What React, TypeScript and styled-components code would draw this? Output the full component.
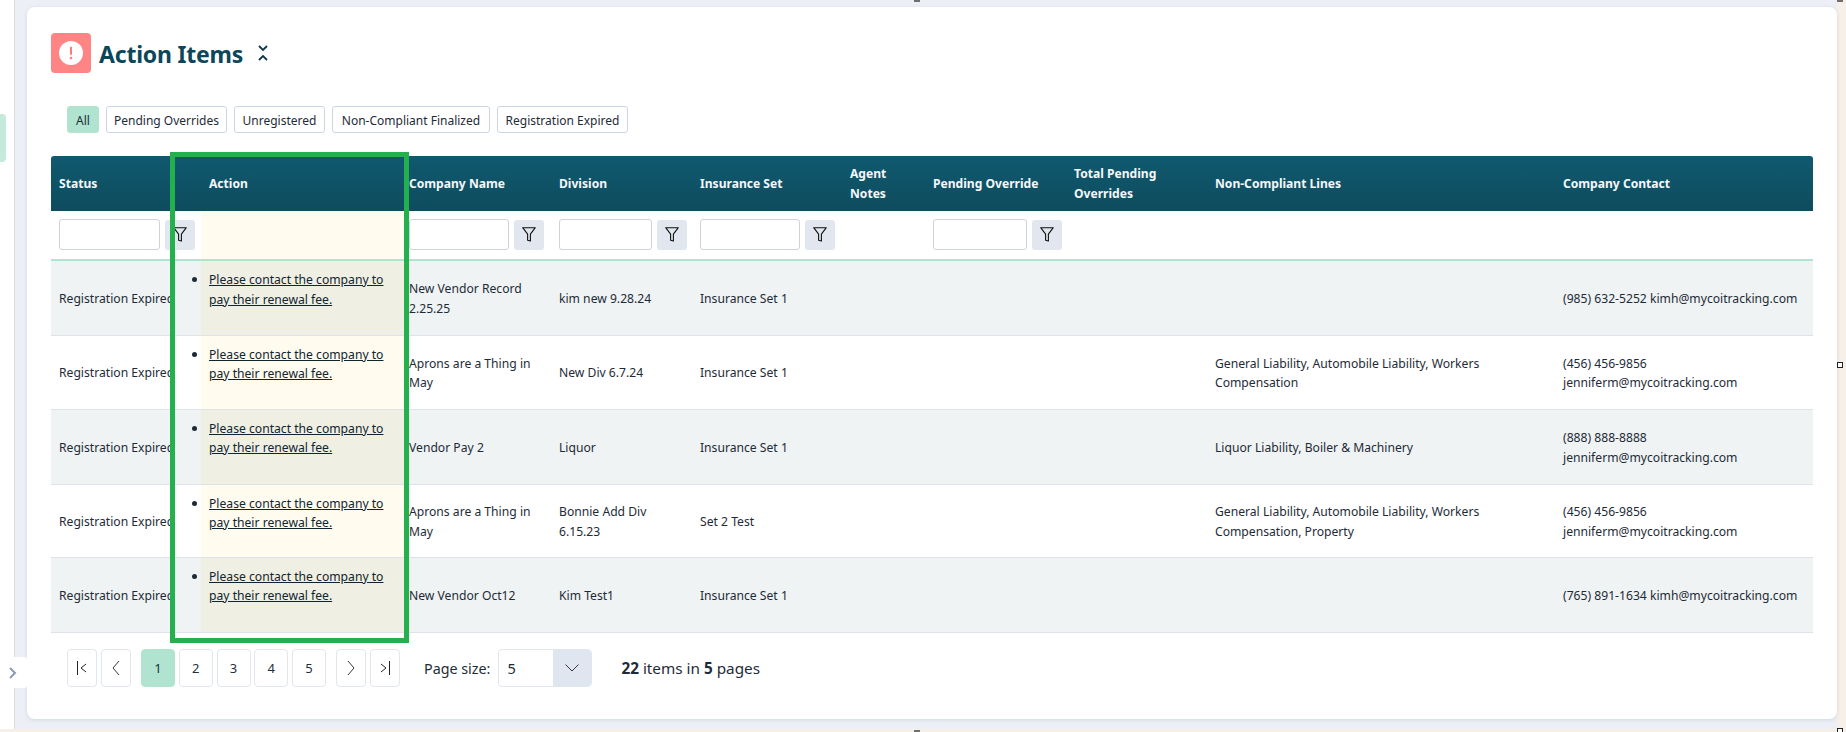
import React from "react";
import styled, { createGlobalStyle } from "styled-components";

const Global = createGlobalStyle`
  html, body { margin: 0; padding: 0; width: 1846px; height: 732px; overflow: hidden; background: #f6f0e9; }
  body { font-family: "Noto Sans", "Open Sans", Arial, sans-serif; color: #1e2b37; font-size: 12.15px; }
  * { box-sizing: border-box; }
`;

const Page = styled.div`
  position: relative;
  width: 1846px;
  height: 732px;
  display: flex;
  flex-direction: column;
`;
const Shell = styled.div`
  display: flex;
  height: 729px;
`;
const Sidebar = styled.aside`
  position: relative;
  width: 15px;
  background: #fff;
  border-right: 1px solid #dcdcdc;
  padding-top: 114px;
`;
const SideMark = styled.div`
  width: 6px;
  height: 48px;
  background: #c3eadb;
  border-radius: 0 4px 4px 0;
`;
const SideToggle = styled.button`
  position: absolute;
  left: 0;
  top: 657px;
  width: 27px;
  height: 31px;
  border: 0;
  padding: 0 2px 0 0;
  background: #fff;
  display: flex;
  align-items: center;
  justify-content: center;
  border-radius: 0 3px 3px 0;
`;
const Main = styled.main`
  width: 1822px;
  background: #ecf0f6;
  padding: 7px 0 10px 12px;
`;
const Card = styled.section`
  width: 1810px;
  height: 712px;
  background: #fff;
  border-radius: 8px;
  box-shadow: 0 1px 4px rgba(60, 80, 100, 0.14);
  padding: 26px 24px 0;
`;
const TitleRow = styled.header`
  display: flex;
  align-items: center;
  height: 40px;
`;
const AlertBadge = styled.div`
  width: 40px;
  height: 40px;
  background: #ff8585;
  border-radius: 4px;
  display: flex;
  align-items: center;
  justify-content: center;
`;
const Title = styled.h1`
  margin: 1px 0 0 8px;
  font-family: "Noto Sans", sans-serif;
  font-size: 23px;
  font-weight: 700;
  color: #0b4759;
  letter-spacing: -0.2px;
`;
const Collapse = styled.span`
  display: flex;
  margin-left: 14px;
`;
const Chips = styled.div`
  display: flex;
  gap: 7px;
  margin: 33px 0 23px 16px;
`;
const Chip = styled.button<{ $on?: boolean; $w: number }>`
  height: 27px;
  width: ${(p) => p.$w}px;
  padding: 1px 0 0 0;
  border-radius: 3px;
  font: 12px "Noto Sans", sans-serif;
  color: #1e2b37;
  background: ${(p) => (p.$on ? "#b0e4d0" : "#fff")};
  border: 1px solid ${(p) => (p.$on ? "#b0e4d0" : "#cdd6e2")};
`;
const TableWrap = styled.div`
  position: relative;
  width: 1762px;
`;
const Highlight = styled.div`
  position: absolute;
  left: 119px;
  top: -4px;
  width: 239px;
  height: 491px;
  border: 5px solid #22b14c;
  pointer-events: none;
`;
const Grid = styled.table`
  width: 1762px;
  table-layout: fixed;
  border-collapse: collapse;
  line-height: 19.5px;
`;
const HeadRow = styled.tr`
  height: 55px;
  background: linear-gradient(#10596f, #0e4c5e);
`;
const Th = styled.th<{ $pad?: number }>`
  padding: 0 8px 0 ${(p) => p.$pad ?? 8}px;
  color: #f4f8f9;
  font-size: 12.1px;
  font-weight: 700;
  text-align: left;
  white-space: normal;
  &:first-child { border-top-left-radius: 3px; }
  &:last-child { border-top-right-radius: 3px; }
`;
const FilterRow = styled.tr`
  height: 49px;
  border-bottom: 2px solid #b0e4d0;
`;
const FilterTd = styled.td<{ $pad?: number; $action?: boolean }>`
  padding: 0 0 2px ${(p) => p.$pad ?? 8}px;
  background: ${(p) => (p.$action ? "#fffbef" : "transparent")};
`;
const FilterBox = styled.div`
  display: flex;
  gap: 5px;
`;
const FilterInput = styled.input<{ $w: number }>`
  width: ${(p) => p.$w}px;
  height: 31px;
  padding: 0;
  background: #fff;
  border: 1px solid #ced3da;
  border-radius: 3px;
`;
const FilterBtn = styled.button`
  width: 30px;
  height: 30px;
  margin-top: 1px;
  border: 0;
  padding: 0;
  border-radius: 3px;
  background: #e1e6ef;
  display: flex;
  align-items: center;
  justify-content: center;
`;
const Row = styled.tr<{ $h: number; $alt: boolean }>`
  height: ${(p) => p.$h}px;
  background: ${(p) => (p.$alt ? "#eff3f4" : "#fff")};
  border-bottom: 1px solid #dfe3e9;
`;
const Td = styled.td<{ $pad?: number }>`
  padding: 2px 8px 0 ${(p) => p.$pad ?? 8}px;
  vertical-align: middle;
  overflow: visible;
`;
const StatusTd = styled(Td)`
  white-space: nowrap;
  overflow: hidden;
`;
const ActionTd = styled.td<{ $alt: boolean }>`
  padding: 8px 8px 0;
  vertical-align: top;
  background: ${(p) => (p.$alt ? "#efefe3" : "#fffbef")};
`;
const ActionList = styled.ul`
  margin: 0;
  padding: 0;
  list-style: disc;
  li::marker { font-size: 15px; }
`;
const ActionLink = styled.a`
  color: #0f2530;
  text-decoration: underline;
`;
const Pager = styled.nav`
  display: flex;
  align-items: center;
  margin: 16px 0 0 16px;
  height: 39px;
`;
const NavBtn = styled.button<{ $mr?: number }>`
  width: 30px;
  height: 38px;
  margin-right: ${(p) => p.$mr ?? 4}px;
  padding: 0;
  background: #fff;
  border: 1px solid #e2e7ee;
  border-radius: 4px;
  display: flex;
  align-items: center;
  justify-content: center;
`;
const PageBtn = styled.button<{ $on?: boolean; $mr: number }>`
  width: 34px;
  height: 38px;
  margin: -1px ${(p) => p.$mr}px 0 0;
  padding: 0;
  border-radius: 4px;
  font: 13px "Noto Sans", sans-serif;
  color: #1e3040;
  background: ${(p) => (p.$on ? "#b0e4d0" : "#fff")};
  border: 1px solid ${(p) => (p.$on ? "#b0e4d0" : "#e2e7ee")};
`;
const SizeLabel = styled.span`
  margin-left: 24px;
  font-size: 14.3px;
`;
const SizeSelect = styled.div`
  width: 94px;
  height: 38px;
  margin-left: 8px;
  display: flex;
  border: 1px solid #e2e7ee;
  border-radius: 4px;
  overflow: hidden;
  font-size: 14.5px;
`;
const SizeValue = styled.span`
  flex: 1;
  padding-left: 8px;
  line-height: 36px;
`;
const SizeArrow = styled.span`
  width: 38px;
  background: #e0e6ef;
  display: flex;
  align-items: center;
  justify-content: center;
`;
const Summary = styled.span`
  margin-left: 29px;
  font-size: 15.3px;
`;
const Bottom = styled.div`
  height: 3px;
  background: #f6f0e9;
`;
const Handle = styled.i<{ $x: number; $y: number; $box?: boolean }>`
  position: absolute;
  left: ${(p) => p.$x}px;
  top: ${(p) => p.$y}px;
  width: 6px;
  height: ${(p) => (p.$box ? 6 : 2)}px;
  background: ${(p) => (p.$box ? "#fff" : "#6f6f6f")};
  border: ${(p) => (p.$box ? "1px solid #222" : "0")};
`;

const Funnel = () => (
  <svg width="14" height="15" viewBox="0 0 14 15" fill="none" stroke="#111" strokeWidth="1.1">
    <path d="M0.7 0.7h12.6L8.4 7.2v6.8l-2.8-.8V7.2z" strokeLinejoin="round" />
  </svg>
);
const Chev = ({ d, w = 12, h = 18, c = "#33393f", s = 1 }: { d: string; w?: number; h?: number; c?: string; s?: number }) => (
  <svg width={w} height={h} viewBox={`0 0 ${w} ${h}`} fill="none" stroke={c} strokeWidth={s}>
    <path d={d} />
  </svg>
);

const cols = [150, 204, 146, 141, 150, 83, 141, 141, 348, 258];

type R = { h: number; co: string; div: string; set: string; lines: string; contact: string };
const rows: R[] = [
  { h: 75, co: "New Vendor Record 2.25.25", div: "kim new 9.28.24", set: "Insurance Set 1", lines: "", contact: "(985) 632-5252 kimh@mycoitracking.com" },
  { h: 74, co: "Aprons are a Thing in May", div: "New Div 6.7.24", set: "Insurance Set 1", lines: "General Liability, Automobile Liability, Workers Compensation", contact: "(456) 456-9856 jenniferm@mycoitracking.com" },
  { h: 75, co: "Vendor Pay 2", div: "Liquor", set: "Insurance Set 1", lines: "Liquor Liability, Boiler & Machinery", contact: "(888) 888-8888 jenniferm@mycoitracking.com" },
  { h: 73, co: "Aprons are a Thing in May", div: "Bonnie Add Div 6.15.23", set: "Set 2 Test", lines: "General Liability, Automobile Liability, Workers Compensation, Property", contact: "(456) 456-9856 jenniferm@mycoitracking.com" },
  { h: 75, co: "New Vendor Oct12", div: "Kim Test1", set: "Insurance Set 1", lines: "", contact: "(765) 891-1634 kimh@mycoitracking.com" },
];

const heads: [string, number?][] = [
  ["Status"], ["Action"], ["Company Name", 4], ["Division"], ["Insurance Set"],
  ["Agent Notes"], ["Pending Override"], ["Total Pending Overrides"], ["Non-Compliant Lines"], ["Company Contact"],
];

const chips: [string, number, boolean][] = [
  ["All", 32, true], ["Pending Overrides", 121, false], ["Unregistered", 91, false],
  ["Non-Compliant Finalized", 158, false], ["Registration Expired", 131, false],
];

const Filter = ({ w }: { w: number }) => (
  <FilterBox>
    <FilterInput $w={w} />
    <FilterBtn><Funnel /></FilterBtn>
  </FilterBox>
);

export default function App() {
  return (
    <Page>
      <Global />
      <Shell>
        <Sidebar>
          <SideMark />
          <SideToggle>
            <Chev w={10} h={14} c="#8d9bb5" s={2} d="M2 2l5 5-5 5" />
          </SideToggle>
        </Sidebar>
        <Main>
          <Card>
            <TitleRow>
              <AlertBadge>
                <svg width="24" height="24" viewBox="0 0 24 24">
                  <circle cx="12" cy="12" r="12" fill="#fff" />
                  <rect x="11" y="5.5" width="2" height="8.5" rx="1" fill="#ff7b7b" />
                  <circle cx="12" cy="17" r="1.3" fill="#ff7b7b" />
                </svg>
              </AlertBadge>
              <Title>Action Items</Title>
              <Collapse>
                <svg width="12" height="18" viewBox="0 0 12 18" fill="none" stroke="#12374a" strokeWidth="1.8">
                  <path d="M2 2l4 4 4-4M2 16l4-4 4 4" />
                </svg>
              </Collapse>
            </TitleRow>
            <Chips>
              {chips.map(([t, w, on]) => (
                <Chip key={t} $w={w} $on={on}>{t}</Chip>
              ))}
            </Chips>
            <TableWrap>
              <Grid>
                <colgroup>
                  {cols.map((w, i) => <col key={i} width={w} />)}
                </colgroup>
                <thead>
                  <HeadRow>
                    {heads.map(([t, pad]) => <Th key={t} $pad={pad}>{t}</Th>)}
                  </HeadRow>
                  <FilterRow>
                    <FilterTd><Filter w={101} /></FilterTd>
                    <FilterTd $action />
                    <FilterTd $pad={4}><Filter w={100} /></FilterTd>
                    <FilterTd><Filter w={93} /></FilterTd>
                    <FilterTd><Filter w={100} /></FilterTd>
                    <FilterTd />
                    <FilterTd><Filter w={94} /></FilterTd>
                    <FilterTd />
                    <FilterTd />
                    <FilterTd />
                  </FilterRow>
                </thead>
                <tbody>
                  {rows.map((r, i) => (
                    <Row key={i} $h={r.h} $alt={i % 2 === 0}>
                      <StatusTd>Registration Expired</StatusTd>
                      <ActionTd $alt={i % 2 === 0}>
                        <ActionList>
                          <li><ActionLink href="#">Please contact the company to pay their renewal fee.</ActionLink></li>
                        </ActionList>
                      </ActionTd>
                      <Td $pad={4}>{r.co}</Td>
                      <Td>{r.div}</Td>
                      <Td>{r.set}</Td>
                      <Td />
                      <Td />
                      <Td />
                      <Td>{r.lines}</Td>
                      <Td>{r.contact}</Td>
                    </Row>
                  ))}
                </tbody>
              </Grid>
              <Highlight />
            </TableWrap>
            <Pager>
              <NavBtn aria-label="First page">
                <Chev w={14} h={18} c="#222" d="M2.5 2v14M11 5l-5 4 5 4" />
              </NavBtn>
              <NavBtn $mr={10} aria-label="Previous page">
                <Chev d="M9 2L3 9l6 7" />
              </NavBtn>
              {[1, 2, 3, 4, 5].map((n) => (
                <PageBtn key={n} $on={n === 1} $mr={n === 5 ? 10 : 3.75}>{n}</PageBtn>
              ))}
              <NavBtn aria-label="Next page">
                <Chev d="M3 2l6 7-6 7" />
              </NavBtn>
              <NavBtn aria-label="Last page" $mr={0}>
                <Chev w={14} h={18} c="#222" d="M11.5 2v14M3 5l5 4-5 4" />
              </NavBtn>
              <SizeLabel>Page size:</SizeLabel>
              <SizeSelect>
                <SizeValue>5</SizeValue>
                <SizeArrow>
                  <Chev w={16} h={10} d="M1.5 1.5L8 8l6.5-6.5" />
                </SizeArrow>
              </SizeSelect>
              <Summary><b>22</b> items in <b>5</b> pages</Summary>
            </Pager>
          </Card>
        </Main>
      </Shell>
      <Bottom />
      <Handle $x={914} $y={0} />
      <Handle $x={914} $y={730} />
      <Handle $x={1837} $y={0} />
      <Handle $x={1837} $y={362} $box />
      <Handle $x={1837} $y={728} $box />
    </Page>
  );
}
